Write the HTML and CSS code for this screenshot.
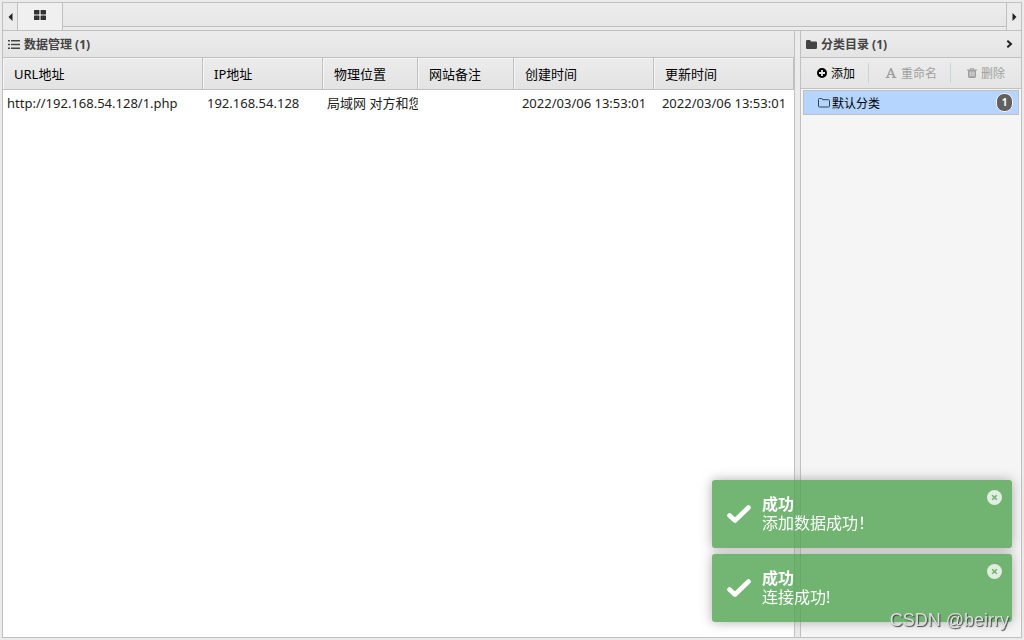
FILE: index.html
```html
<!DOCTYPE html>
<html lang="zh-CN">
<head>
    <meta charset="UTF-8">
    <meta name="viewport" content="width=device-width, initial-scale=1.0">
    <title>数据管理</title>
    <link rel="stylesheet" href="styles.css">
</head>
<body>
    <div class="app">
        <nav class="tabbar">
            <button type="button" class="scroll scroll-left" aria-label="向左">
                <svg width="5" height="8" viewBox="0 0 5 8"><path d="M4.5 0v8L.5 4z"/></svg>
            </button>
            <button type="button" class="tab" aria-label="首页">
                <svg width="12" height="10" viewBox="0 0 12 10"><rect width="5.4" height="4.4" rx=".6"/><rect x="6.6" width="5.4" height="4.4" rx=".6"/><rect y="5.6" width="5.4" height="4.4" rx=".6"/><rect x="6.6" y="5.6" width="5.4" height="4.4" rx=".6"/></svg>
            </button>
            <div class="tab-space"></div>
            <button type="button" class="scroll scroll-right" aria-label="向右">
                <svg width="5" height="8" viewBox="0 0 5 8"><path d="M.5 0v8l4-4z"/></svg>
            </button>
        </nav>

        <main class="panels">
            <section class="panel data-panel">
                <h2 class="panel-title">
                    <svg width="12" height="9" viewBox="0 0 12 9"><path d="M0 0h2v1.600H0zM3 0h9v1.600H3zM0 3.700h2v1.600H0zM3 3.700h9v1.600H3zM0 7.400h2V9H0zM3 7.400h9V9H3z"/></svg>
                    <span>数据管理 (1)</span>
                </h2>
                <table class="grid">
                    <colgroup>
                        <col class="col-url">
                        <col class="col-ip">
                        <col class="col-addr">
                        <col class="col-note">
                        <col class="col-time">
                        <col class="col-time">
                    </colgroup>
                    <thead>
                        <tr>
                            <th>URL地址</th>
                            <th>IP地址</th>
                            <th>物理位置</th>
                            <th>网站备注</th>
                            <th>创建时间</th>
                            <th>更新时间</th>
                        </tr>
                    </thead>
                    <tbody>
                        <tr>
                            <td>http://192.168.54.128/1.php</td>
                            <td>192.168.54.128</td>
                            <td>局域网 对方和您</td>
                            <td></td>
                            <td class="time">2022/03/06 13:53:01</td>
                            <td class="time">2022/03/06 13:53:01</td>
                        </tr>
                    </tbody>
                </table>
            </section>

            <aside class="panel category-panel">
                <h2 class="panel-title">
                    <svg width="11" height="9" viewBox="0 0 11 9"><path d="M0 1.2Q0 0 1.2 0h2.4q1.2 0 1.2 1.4h5q1.2 0 1.2 1.2v5.2Q11 9 9.8 9H1.2Q0 9 0 7.8z"/></svg>
                    <span>分类目录 (1)</span>
                    <button type="button" class="collapse" aria-label="收起">
                        <svg width="7" height="8" viewBox="0 0 7 8"><path d="M1.3.7L5 4 1.3 7.3" fill="none" stroke="#222" stroke-width="2"/></svg>
                    </button>
                </h2>
                <div class="toolbar">
                    <button type="button">
                        <svg width="10" height="10" viewBox="0 0 10 10"><path fill-rule="evenodd" d="M5 0a5 5 0 100 10A5 5 0 005 0zM4.1 2h1.8v2.1H8v1.8H5.9V8H4.1V5.9H2V4.1h2.1z"/></svg>
                        <span>添加</span>
                    </button>
                    <button type="button" disabled>
                        <svg width="12" height="10" viewBox="0 0 12 10"><path fill-rule="evenodd" d="M5.4 0h1.2l3.5 8.5q.2.6 1.4.7v.8H6.9v-.8q1.2-.1 1-.7L7.4 7H3.9l-.4 1.2q-.3.9 1 1v.8H.5v-.8q1-.1 1.4-1zM5.6 2.4L4.3 6H7z"/></svg>
                        <span>重命名</span>
                    </button>
                    <button type="button" disabled>
                        <svg width="10" height="10" viewBox="0 0 10 10"><path fill-rule="evenodd" d="M3.4 0h3.2l.6 1.4H10v1.2H9v6Q9 10 7.8 10H2.2Q1 10 1 8.6v-6H0V1.4h2.8zM3.9.8l-.3.6h2.8L6.1.8zM2.700 3.500v4.700h.9V3.500zM4.600 3.500v4.700h.9V3.500zM6.500 3.500v4.700h.9V3.500z"/></svg>
                        <span>删除</span>
                    </button>
                </div>
                <ul class="categories">
                    <li>
                        <a href="#" class="category">
                            <svg width="12" height="10" viewBox="0 0 12 10"><path d="M.5 1.5q0-1 1-1h2q1 0 1 1.200h6q1 0 1 1v5.300q0 1-1 1h-9q-1 0-1-1z" fill="none" stroke="#345"/></svg>
                            <span>默认分类</span>
                            <b class="count">1</b>
                        </a>
                    </li>
                </ul>
            </aside>
        </main>
    </div>

    <div class="toasts">
        <div class="toast" role="status">
            <svg width="24" height="18" viewBox="0 0 24 18"><path d="M2.500 10.500l5.500 5L21.500 2.500" fill="none" stroke="#fff" stroke-width="4.600" stroke-linecap="round" stroke-linejoin="round"/></svg>
            <div class="message">
                <strong>成功</strong>
                <p>添加数据成功！</p>
            </div>
            <button type="button" class="close" aria-label="关闭">
                <svg width="15" height="15" viewBox="0 0 15 15"><circle cx="7.500" cy="7.500" r="7.500" fill="#fff"/><path d="M5.200 5.200l4.600 4.600M9.800 5.200L5.200 9.800" stroke="#51a351" stroke-width="1.600"/></svg>
            </button>
        </div>
        <div class="toast" role="status">
            <svg width="24" height="18" viewBox="0 0 24 18"><path d="M2.500 10.500l5.500 5L21.500 2.500" fill="none" stroke="#fff" stroke-width="4.600" stroke-linecap="round" stroke-linejoin="round"/></svg>
            <div class="message">
                <strong>成功</strong>
                <p>连接成功!</p>
            </div>
            <button type="button" class="close" aria-label="关闭">
                <svg width="15" height="15" viewBox="0 0 15 15"><circle cx="7.500" cy="7.500" r="7.500" fill="#fff"/><path d="M5.200 5.200l4.600 4.600M9.800 5.200L5.200 9.800" stroke="#51a351" stroke-width="1.600"/></svg>
            </button>
        </div>
    </div>
    <div class="watermark">CSDN @beirry</div>
</body>
</html>
```
FILE: styles.css
```css
* {
    box-sizing: border-box;
}
body {
    margin: 0;
    padding: 2px;
    height: 100vh;
    overflow: hidden;
    background-color: #ebebeb;
    color: #000;
    font-family: "Noto Sans", "Noto Sans CJK SC", sans-serif;
    font-size: 12px;
}
h2, p, ul {
    margin: 0;
    padding: 0;
}
svg {
    display: block;
    flex: none;
    fill: currentColor;
}
button {
    padding: 0;
    border: none;
    background: none;
    color: inherit;
    font: inherit;
    cursor: pointer;
}
.app {
    display: flex;
    flex-direction: column;
    height: calc(100vh - 4px);
    border: 1px solid #c0c0c0;
}
/* tabs */
.tabbar {
    display: flex;
    height: 28px;
    border-bottom: 1px solid #c0c0c0;
    color: #333;
}
.scroll {
    display: flex;
    align-items: center;
    justify-content: center;
    width: 15px;
    color: #222;
}
.scroll-left {
    border-right: 1px solid #c0c0c0;
}
.scroll-right {
    border-left: 1px solid #c0c0c0;
}
.tab {
    display: flex;
    align-items: center;
    justify-content: center;
    width: 45px;
    padding-bottom: 3px;
    border-right: 1px solid #c0c0c0;
    background-color: #f0f0f0;
}
.tab-space {
    flex: 1;
    margin-bottom: 3px;
    border-bottom: 1px solid #c0c0c0;
    background: linear-gradient(#ededed, #e6e6e6);
}
/* panels */
.panels {
    flex: 1;
    display: grid;
    grid-template-columns: 1fr 221px;
    gap: 5px;
    min-height: 0;
}
.panel {
    min-width: 0;
}
.data-panel {
    border-right: 1px solid #c0c0c0;
    background-color: #fff;
}
.category-panel {
    border-left: 1px solid #c0c0c0;
    background-color: #f5f5f5;
}
.panel-title {
    display: flex;
    align-items: center;
    gap: 4px;
    height: 27px;
    padding: 0 5px;
    border-bottom: 1px solid #c0c0c0;
    background: linear-gradient(#ececec, #e4e4e4);
    color: #444;
    font-size: 12px;
    font-weight: bold;
}
.collapse {
    margin-left: auto;
    padding: 4px 3px;
}
/* data table */
.grid {
    width: 100%;
    table-layout: fixed;
    border-collapse: separate;
    border-spacing: 0;
    font-size: 13px;
    line-height: 20px;
}
.col-url {
    width: 200px;
}
.col-ip {
    width: 120px;
}
.col-addr {
    width: 95px;
}
.col-note {
    width: 96px;
}
.grid th {
    height: 32px;
    padding: 0 11px;
    border-right: 1px solid #c0c0c0;
    border-bottom: 1px solid #c0c0c0;
    background: linear-gradient(#ececec, #e3e3e3);
    box-shadow: inset 1px 1px 0 #f6f6f6;
    font-weight: normal;
    text-align: left;
}
.grid td {
    height: 26px;
    padding: 0 0 0 4px;
    overflow: hidden;
    white-space: nowrap;
    color: #222;
}
.grid .time {
    padding: 0;
    text-align: center;
}
/* categories */
.toolbar {
    display: flex;
    align-items: center;
    height: 31px;
    border-bottom: 1px solid #c0c0c0;
    background: linear-gradient(#ececec, #e4e4e4);
}
.toolbar button {
    display: flex;
    align-items: center;
    gap: 4px;
    height: 20px;
    padding: 0 13px 0 16px;
}
.toolbar button + button {
    border-left: 1px solid #c5d5da;
}
.toolbar button:disabled {
    color: #a0a0a0;
    cursor: default;
}
.categories {
    padding: 1px 2px;
    list-style: none;
}
.category {
    display: flex;
    align-items: center;
    gap: 2px;
    height: 25px;
    padding: 0 5px 0 14px;
    border: 1px solid #c0c0c0;
    background-color: #b5d5ff;
    color: #000;
    text-decoration: none;
}
.count {
    width: 17px;
    height: 19px;
    margin-left: auto;
    border: 1px solid #f5f5f5;
    border-radius: 8px;
    background-color: #606060;
    color: #fff;
    font-size: 10px;
    line-height: 17px;
    text-align: center;
}
/* notifications */
.toasts {
    position: fixed;
    right: 12px;
    bottom: 18px;
    display: grid;
    gap: 6px;
    width: 300px;
}
.toast {
    display: flex;
    align-items: center;
    height: 68px;
    padding: 0 10px 0 15px;
    border-radius: 3px;
    background-color: #51a351;
    box-shadow: 0 0 12px #999;
    color: #fff;
    font-size: 16px;
    line-height: 19px;
    opacity: 0.8;
}
.message {
    padding-left: 11px;
}
.message strong {
    display: block;
}
.close {
    align-self: flex-start;
    margin: 10px 0 0 auto;
    opacity: 0.8;
}
.watermark {
    position: fixed;
    right: 15px;
    bottom: 9px;
    color: #ddd;
    font-family: "Liberation Sans", sans-serif;
    font-size: 18px;
    line-height: 22px;
    text-shadow: 1px 1px 1px #444;
}
```
